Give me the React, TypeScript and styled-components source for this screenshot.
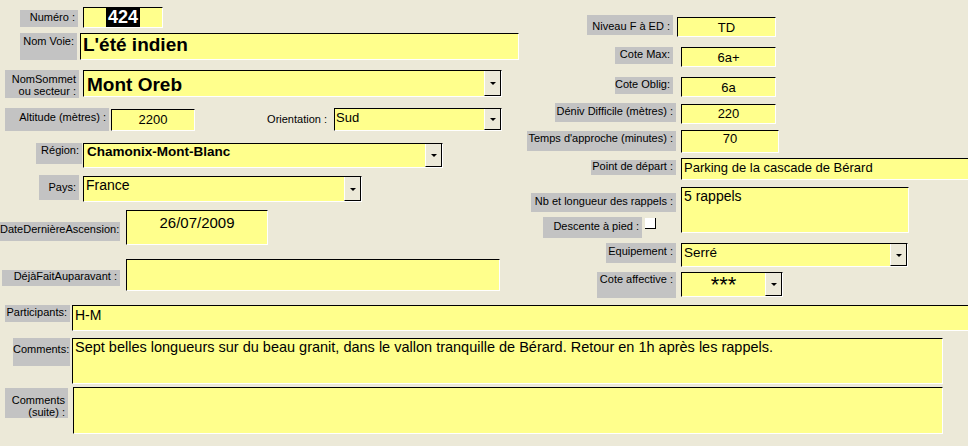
import React from "react";
import styled, { createGlobalStyle } from "styled-components";

const Global = createGlobalStyle`
  html, body { margin: 0; padding: 0; background: #ECE9D8; }
  body { font-family: "Liberation Sans", Arial, sans-serif; }
`;

const Form = styled.div`
  width: 968px;
  height: 446px;
  overflow: hidden;
  background: #ece9d8;
  font-family: "Liberation Sans", Arial, sans-serif;
  color: #000;
`;

const Top = styled.div`
  display: flex;
  height: 305px;
`;

const LeftCol = styled.div`
  flex: none;
  width: 520px;
  padding-top: 6px;
  box-sizing: border-box;
`;

const RightCol = styled.div`
  flex: 1;
  min-width: 0;
  padding-top: 15px;
`;

const Bottom = styled.div``;

const Row = styled.div<{ $h?: number }>`
  display: flex;
  align-items: flex-start;
  height: ${(p) => (p.$h ? `${p.$h}px` : "auto")};
`;

type Box = { $ml: number; $w: number; $h: number; $dy?: number; $pt?: number };

const Caption = styled.div<Box & { $plain?: boolean }>`
  flex: none;
  box-sizing: border-box;
  margin-left: ${(p) => p.$ml}px;
  margin-top: ${(p) => p.$dy ?? 0}px;
  width: ${(p) => p.$w}px;
  height: ${(p) => p.$h}px;
  padding: ${(p) => p.$pt ?? 1}px 3px 0 0;
  background: ${(p) => (p.$plain ? "transparent" : "#c3c3c3")};
  font-size: 11px;
  line-height: 12px;
  text-align: right;
  white-space: pre;
`;

type Txt = { $size?: number; $bold?: boolean; $pl?: number; $center?: boolean; $lh?: number };

const Field = styled.div<Box & Txt>`
  flex: none;
  box-sizing: border-box;
  margin-left: ${(p) => p.$ml}px;
  margin-top: ${(p) => p.$dy ?? 0}px;
  width: ${(p) => p.$w}px;
  height: ${(p) => p.$h}px;
  padding: ${(p) => p.$pt ?? 0}px 0 0 ${(p) => p.$pl ?? 2}px;
  background: #ffff8c;
  border-top: 1px solid #000;
  border-left: 1px solid #000;
  border-right: 1px solid #fff;
  border-bottom: 1px solid #fff;
  font-size: ${(p) => p.$size ?? 13}px;
  font-weight: ${(p) => (p.$bold ? 700 : 400)};
  line-height: ${(p) => p.$lh ?? Math.round((p.$size ?? 13) * 1.17)}px;
  text-align: ${(p) => (p.$center ? "center" : "left")};
  white-space: nowrap;
  overflow: hidden;
`;

const ComboBox = styled.div<Box>`
  flex: none;
  box-sizing: border-box;
  display: flex;
  margin-left: ${(p) => p.$ml}px;
  margin-top: ${(p) => p.$dy ?? 0}px;
  width: ${(p) => p.$w}px;
  height: ${(p) => p.$h}px;
  background: #ffff8c;
  border-top: 1px solid #000;
  border-left: 1px solid #000;
  border-right: 1px solid #fff;
  border-bottom: 1px solid #fff;
`;

const ComboValue = styled.div<Txt & { $pt?: number }>`
  flex: 1;
  min-width: 0;
  padding: ${(p) => p.$pt ?? 0}px 0 0 ${(p) => p.$pl ?? 2}px;
  font-size: ${(p) => p.$size ?? 13}px;
  font-weight: ${(p) => (p.$bold ? 700 : 400)};
  line-height: ${(p) => p.$lh ?? Math.round((p.$size ?? 13) * 1.17)}px;
  text-align: ${(p) => (p.$center ? "center" : "left")};
  white-space: nowrap;
  overflow: hidden;
`;

const DropButton = styled.div`
  flex: none;
  width: 17px;
  box-sizing: border-box;
  background: #ece9d8;
  border-left: 1px solid #fff;
  border-right: 1px solid #000;
  border-bottom: 1px solid #000;
  display: flex;
  align-items: center;
  justify-content: center;
  padding-top: 1px;

  &::after {
    content: "";
    width: 0;
    height: 0;
    border-left: 3px solid transparent;
    border-right: 3px solid transparent;
    border-top: 3px solid #000;
  }
`;

const Selected = styled.span`
  display: inline-block;
  background: #000;
  color: #fff;
  font-weight: 700;
  font-size: 18px;
  line-height: 19px;
  padding: 0 2px;
`;

const LabelStack = styled.div<{ $ml: number; $w: number }>`
  flex: none;
  display: flex;
  flex-direction: column;
  margin-left: ${(p) => p.$ml}px;
  width: ${(p) => p.$w}px;
`;

const CheckRow = styled.div`
  display: flex;
  align-items: flex-start;
`;

const CheckBox = styled.div`
  flex: none;
  box-sizing: border-box;
  width: 11px;
  height: 11px;
  margin: 6px 0 0 3px;
  background: #fff;
  border-right: 1px solid #000;
  border-bottom: 1px solid #000;
`;

const Combo: React.FC<
  Box & Txt & { children: React.ReactNode; $vpt?: number }
> = ({ $ml, $w, $h, $dy, $vpt, $size, $bold, $pl, $center, $lh, children }) => (
  <ComboBox $ml={$ml} $w={$w} $h={$h} $dy={$dy}>
    <ComboValue $pt={$vpt} $size={$size} $bold={$bold} $pl={$pl} $center={$center} $lh={$lh}>
      {children}
    </ComboValue>
    <DropButton />
  </ComboBox>
);

export default function App() {
  return (
    <>
      <Global />
      <Form>
        <Top>
          <LeftCol>
            <Row $h={27}>
              <Caption $ml={20} $w={58} $h={17} $dy={4} $pt={1}>Numéro :</Caption>
              <Field $ml={5} $w={80} $h={21} $dy={1} $pl={0} $center>
                <Selected>424</Selected>
              </Field>
            </Row>
            <Row $h={37}>
              <Caption $ml={20} $w={57} $h={27} $pt={2}>Nom Voie:</Caption>
              <Field $ml={3} $w={439} $h={27} $pt={0} $pl={2} $size={19} $bold>
                L'été indien
              </Field>
            </Row>
            <Row $h={37}>
              <Caption $ml={5} $w={74} $h={28} $pt={3}>{"NomSommet\nou secteur :"}</Caption>
              <Combo $ml={4} $w={419} $h={27} $vpt={3} $pl={3} $size={19} $bold>
                Mont Oreb
              </Combo>
            </Row>
            <Row $h={36}>
              <Caption $ml={5} $w={104} $h={23} $dy={1} $pt={3}>Altitude (mètres) :</Caption>
              <Field $ml={2} $w={84} $h={22} $dy={2} $pt={2} $center $pl={0}>
                2200
              </Field>
              <Caption $plain $ml={70} $w={65} $h={16} $dy={6} $pt={0}>Orientation :</Caption>
              <Combo $ml={4} $w={168} $h={23} $dy={1} $vpt={1} $pl={1}>
                Sud
              </Combo>
            </Row>
            <Row $h={32}>
              <Caption $ml={36} $w={46} $h={21} $pt={1}>Région:</Caption>
              <Combo $ml={1} $w={360} $h={25} $vpt={0} $pl={3} $size={13.5} $bold>
                Chamonix-Mont-Blanc
              </Combo>
            </Row>
            <Row $h={35}>
              <Caption $ml={39} $w={40} $h={25} $pt={6}>Pays:</Caption>
              <Combo $ml={4} $w={279} $h={26} $dy={1} $vpt={0} $pl={2} $size={14}>
                France
              </Combo>
            </Row>
            <Row $h={49}>
              <Caption $ml={0} $w={120} $h={19} $dy={12} $pt={1}>DateDernièreAscension:</Caption>
              <Field $ml={6} $w={142} $h={35} $pt={3} $size={15} $center $pl={0}>
                26/07/2009
              </Field>
            </Row>
            <Row>
              <Caption $ml={2} $w={118} $h={16} $dy={11} $pt={0}>DéjàFaitAuparavant :</Caption>
              <Field $ml={6} $w={374} $h={32} />
            </Row>
          </LeftCol>

          <RightCol>
            <Row $h={32}>
              <Caption $ml={67} $w={86} $h={20} $pt={5}>Niveau F à ED :</Caption>
              <Field $ml={4} $w={99} $h={20} $dy={2} $pt={2} $center $pl={0}>TD</Field>
            </Row>
            <Row $h={30}>
              <Caption $ml={95} $w={58} $h={17} $pt={1}>Cote Max:</Caption>
              <Field $ml={8} $w={95} $h={20} $pt={2} $center $pl={0}>6a+</Field>
            </Row>
            <Row $h={26}>
              <Caption $ml={95} $w={58} $h={17} $pt={1}>Cote Oblig:</Caption>
              <Field $ml={8} $w={95} $h={20} $pt={2} $center $pl={0}>6a</Field>
            </Row>
            <Row $h={27}>
              <Caption $ml={35} $w={121} $h={19} $pt={2}>Déniv Difficile (mètres) :</Caption>
              <Field $ml={5} $w={95} $h={20} $dy={1} $pt={1} $center $pl={0}>220</Field>
            </Row>
            <Row $h={28}>
              <Caption $ml={7} $w={149} $h={20} $dy={1} $pt={1}>Temps d'approche (minutes) :</Caption>
              <Field $ml={5} $w={98} $h={23} $pt={0} $center $pl={0}>70</Field>
            </Row>
            <Row $h={29}>
              <Caption $ml={71} $w={85} $h={15} $dy={2} $pt={0}>Point de départ :</Caption>
              <Field $ml={5} $w={300} $h={22} $pt={1} $pl={2}>
                Parking de la cascade de Bérard
              </Field>
            </Row>
            <Row $h={56}>
              <LabelStack $ml={11} $w={145}>
                <Caption $ml={0} $w={145} $h={19} $dy={6} $pt={2}>Nb et longueur des rappels :</Caption>
                <CheckRow>
                  <Caption $ml={12} $w={99} $h={21} $dy={5} $pt={3}>Descente à pied :</Caption>
                  <CheckBox />
                </CheckRow>
              </LabelStack>
              <Field $ml={5} $w={228} $h={46} $pt={0} $pl={2} $size={14}>
                5 rappels
              </Field>
            </Row>
            <Row $h={29}>
              <Caption $ml={86} $w={70} $h={20} $pt={2}>Equipement :</Caption>
              <Combo $ml={5} $w={227} $h={24} $vpt={1} $pl={2} $size={13.5}>
                Serré
              </Combo>
            </Row>
            <Row>
              <Caption $ml={77} $w={79} $h={26} $pt={1}>Cote affective :</Caption>
              <Combo $ml={5} $w={102} $h={25} $vpt={3} $size={22} $lh={18} $center $pl={0}>
                ***
              </Combo>
            </Row>
          </RightCol>
        </Top>

        <Bottom>
          <Row $h={33}>
            <Caption $ml={5} $w={65} $h={17} $pt={1}>Participants:</Caption>
            <Field $ml={2} $w={910} $h={26} $pt={1} $pl={2} $size={14}>H-M</Field>
          </Row>
          <Row $h={49}>
            <Caption $ml={13} $w={57} $h={28} $pt={5}>Comments:</Caption>
            <Field $ml={2} $w={871} $h={46} $pt={0} $pl={2} $size={14.5}>
              Sept belles longueurs sur du beau granit, dans le vallon tranquille de Bérard. Retour en 1h après les rappels.
            </Field>
          </Row>
          <Row>
            <Caption $ml={5} $w={63} $h={30} $dy={1} $pt={6}>{"Comments\n(suite) :"}</Caption>
            <Field $ml={5} $w={870} $h={47} />
          </Row>
        </Bottom>
      </Form>
    </>
  );
}
